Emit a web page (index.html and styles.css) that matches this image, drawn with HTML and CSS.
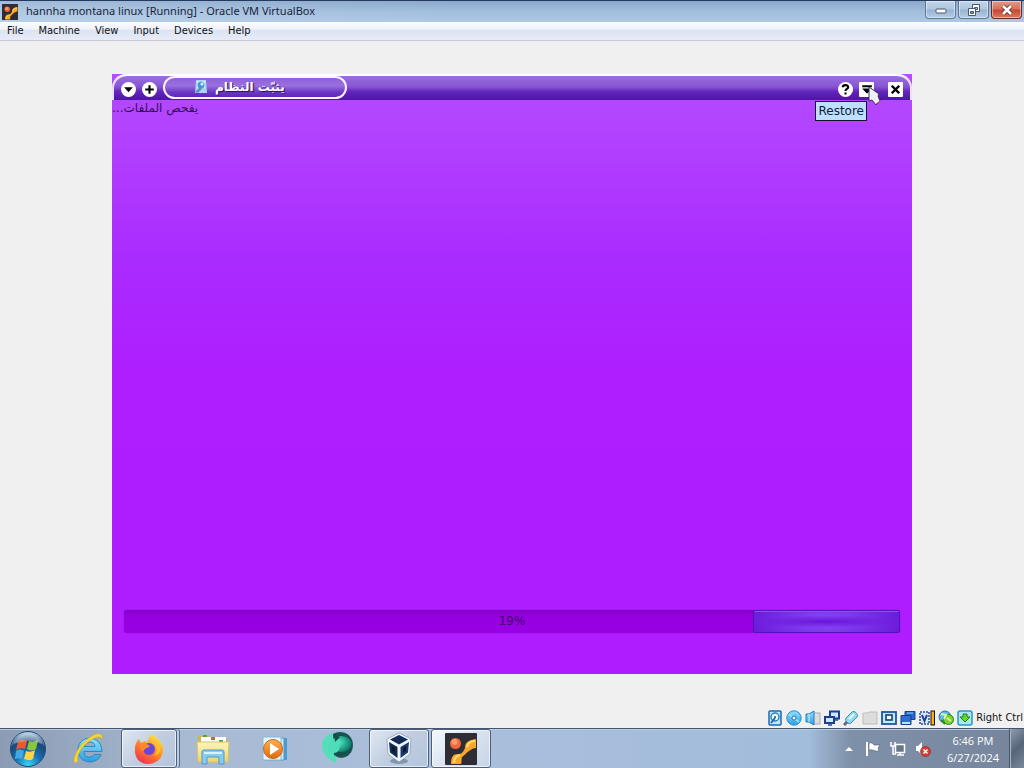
FILE: index.html
```html
<!DOCTYPE html>
<html lang="en">
<head>
<meta charset="utf-8">
<title>hannha montana linux [Running] - Oracle VM VirtualBox</title>
<link rel="stylesheet" href="styles.css">
</head>
<body>
<svg class="defs" aria-hidden="true">
  <defs>
    <linearGradient id="gBlue" x1="0" y1="0" x2="0" y2="1"><stop offset="0" stop-color="#8fe0fa"/><stop offset="1" stop-color="#2f9fe0"/></linearGradient>
    <radialGradient id="gOrb" cx=".5" cy=".95" r=".9"><stop offset="0" stop-color="#35d5f5"/><stop offset=".4" stop-color="#1872b4"/><stop offset=".75" stop-color="#1a4777"/><stop offset="1" stop-color="#a9c4dc"/></radialGradient>
    <linearGradient id="gFox" x1=".8" y1="0" x2=".2" y2="1"><stop offset="0" stop-color="#fff04a"/><stop offset=".45" stop-color="#ff9127"/><stop offset="1" stop-color="#f02c50"/></linearGradient>
    <linearGradient id="gFolder" x1="0" y1="0" x2="0" y2="1"><stop offset="0" stop-color="#fdf6b8"/><stop offset="1" stop-color="#eed36c"/></linearGradient>
    <linearGradient id="gIE" x1="0" y1="0" x2="0" y2="1"><stop offset="0" stop-color="#8fe4fb"/><stop offset="1" stop-color="#2c9bdc"/></linearGradient>
    <radialGradient id="gTeal" cx=".35" cy=".4" r=".7"><stop offset="0" stop-color="#5ff0cc"/><stop offset=".6" stop-color="#1fa78b"/><stop offset="1" stop-color="#146a62"/></radialGradient>
    <linearGradient id="gOr" x1="0" y1="0" x2="0" y2="1"><stop offset="0" stop-color="#ffb14a"/><stop offset="1" stop-color="#e06a10"/></linearGradient>
    <symbol id="vm" viewBox="0 0 32 32">
      <rect width="32" height="32" rx="1" fill="#2e2d33"/>
      <circle cx="10.500" cy="10.500" r="5.500" fill="#f4673a"/><circle cx="9.500" cy="9" r="3" fill="#ff9a6c"/>
      <path d="M6 31C6 24 8 21 13 21 17 21 18 19 20 15 20 9 24 7 31 6V15C28 15 27 16 24 18 21 20 20 22 17 24 16 27 17 29 16 31Z" fill="#f9a72b"/>
      <path d="M9 30C9 25 11 23 15 22M22 14C23 10 26 8 30 8" stroke="#ffdc73" stroke-width="2" fill="none"/>
    </symbol>
  </defs>
</svg>

<header class="titlebar">
  <svg class="titlebar-icon" viewBox="0 0 32 32"><use href="#vm"/></svg>
  <h1 class="titlebar-text">hannha montana linux [Running] - Oracle VM VirtualBox</h1>
  <div class="caption">
    <button class="caption-button" type="button" aria-label="Minimize"><svg width="14" height="12" viewBox="0 0 14 12"><rect x="2" y="5" width="10" height="4" rx="1" fill="#fff" stroke="#46586f"/></svg></button>
    <button class="caption-button" type="button" aria-label="Restore window"><svg width="14" height="14" viewBox="0 0 14 14" fill="#fff" stroke="#46586f"><path d="M5.500 1.500h7v7h-7z"/><path d="M7.500 4.500h3v2h-3z" fill="#a9c0dc"/><path d="M1.500 5.500h7v7h-7z"/><path d="M3.500 8.500h3v2h-3z" fill="#7c92b0"/></svg></button>
    <button class="caption-button caption-close" type="button" aria-label="Close window"><svg width="14" height="12" viewBox="0 0 14 12"><path d="M3 2l8 8M11 2l-8 8" stroke="#6d3030" stroke-width="4.500"/><path d="M3 2l8 8M11 2l-8 8" stroke="#fff" stroke-width="2.600"/></svg></button>
  </div>
</header>

<nav class="menubar">
  <button type="button">File</button><button type="button">Machine</button><button type="button">View</button><button type="button">Input</button><button type="button">Devices</button><button type="button">Help</button>
</nav>

<main class="workspace">
  <section class="guest">
    <div class="guest-bar">
      <div class="guest-tools">
        <button class="round" type="button" aria-label="Window menu"><svg viewBox="0 0 14 14"><path d="M3 5h8l-4 4.500z"/></svg></button>
        <button class="round" type="button" aria-label="On all desktops"><svg viewBox="0 0 14 14"><path d="M7 3v8M3 7h8" stroke="#000" stroke-width="2"/></svg></button>
      </div>
      <div class="guest-tab">
        <svg width="14" height="14" viewBox="0 0 14 14"><path d="M2 0h10l1 13H1z" fill="#a9d4f8"/><path d="M3 1h8v7H3z" fill="#d4efff"/><circle cx="7" cy="5" r="3.500" fill="#4797da"/><circle cx="8" cy="4" r="1.500" fill="#e8f8ff"/><path d="M1 12l5-5 2 2-4 4z" fill="#618ec5"/></svg>
        <h2 lang="ar" dir="rtl">يثبّت النظام</h2>
      </div>
      <div class="guest-controls">
        <button class="round" type="button" aria-label="Help"><svg viewBox="0 0 14 14"><path d="M4.500 5C4.500 2.300 9.800 2.300 9.500 5 9.300 6.500 7 6.600 7 8.400M7 9.700v2" stroke="#000" stroke-width="2" fill="none"/></svg></button>
        <button class="square" type="button" aria-describedby="tip" aria-label="Restore"><svg viewBox="0 0 14 14"><path d="M3 3h9v2H3zM3 6h9L8 10.500H7z"/></svg>
          <svg class="pointer" width="16" height="22" viewBox="0 0 16 22"><path d="M2 1L12 8 11 10 13 15 9 19 5 14 2 15Z" fill="#f1eff9" stroke="#37344d"/><path d="M9 18l4-3" stroke="#d55"/></svg>
        </button>
        <span class="tooltip" id="tip" role="tooltip">Restore</span>
        <button class="square square-close" type="button" aria-label="Close"><svg viewBox="0 0 14 14"><path d="M3.500 3.500l7 7M10.500 3.500l-7 7" stroke="#000" stroke-width="2.300"/></svg></button>
      </div>
    </div>
    <div class="guest-body">
      <p class="guest-message" lang="ar" dir="rtl"><label for="install">يفحص الملفات...</label></p>
      <div class="meter">
        <progress id="install" dir="rtl" max="100" value="19"></progress>
        <span class="meter-text">19%</span>
      </div>
    </div>
  </section>
</main>

<footer class="statusbar">
  <svg viewBox="0 0 16 16"><rect x="2" y="1" width="12" height="14" rx="1" fill="#bdeafb" stroke="#1d67b4" stroke-width="1.500"/><circle cx="8" cy="7" r="4" fill="#eafaff" stroke="#247fc8" stroke-width="1.400"/><circle cx="8" cy="7" r="1" fill="#165"/><path d="M4 13l4-5" stroke="#176bb4" stroke-width="2"/></svg>
  <svg viewBox="0 0 16 16"><circle cx="8" cy="8" r="7.200" fill="url(#gBlue)" stroke="#2c8bd0"/><path d="M8 8L3 4M8 8l5 4" stroke="#8fdcf8" stroke-width="2"/><circle cx="8" cy="8" r="2" fill="#fff" stroke="#1c6eb8"/></svg>
  <svg viewBox="0 0 16 16"><rect x="8" y="3" width="7" height="11" fill="#ddd" stroke="#aaa"/><path d="M1 4h3l5-3v14l-5-3H1z" fill="url(#gBlue)" stroke="#267ac0"/><path d="M4 4v8" stroke="#c8f3ff"/></svg>
  <svg viewBox="0 0 16 16"><path d="M6 1.500h9v7H6z" fill="#cbe8ff" stroke="#1d3f8e" stroke-width="2"/><path d="M1 7h9v6H1z" fill="#cbe8ff" stroke="#1d3f8e" stroke-width="2"/><path d="M4 15h4M11 10h3" stroke="#234a9b" stroke-width="1.500"/></svg>
  <svg viewBox="0 0 16 16"><path d="M3 8L9 2c2-2 7 2 5 5l-6 6c-2 2-7-2-5-5z" fill="#8fdcf0" stroke="#3b8fae"/><path d="M6 9l5-5" stroke="#e8fbff" stroke-width="2"/><path d="M4 12l-3 3" stroke="#667" stroke-width="3"/></svg>
  <svg viewBox="0 0 16 16"><path d="M1 3h5l1-1h8v12H1z" fill="#dcdcdc" stroke="#bdbdbd"/></svg>
  <svg viewBox="0 0 16 16"><rect x="1" y="2" width="14" height="12" fill="#bdeaff" stroke="#20559f" stroke-width="1.800"/><rect x="5" y="5" width="6" height="5" fill="#fff" stroke="#163b83" stroke-width="1.600"/></svg>
  <svg viewBox="0 0 16 16"><path d="M5 1.500h10v8H5z" fill="#2969c8" stroke="#193e98"/><path d="M1 5.500h10v9H1z" fill="#2d6fd0" stroke="#163c96"/><path d="M2 13h8" stroke="#b7e6ff" stroke-width="2"/><path d="M7 3h6" stroke="#8bc6ff"/></svg>
  <svg viewBox="0 0 16 16"><rect x="1" y="2" width="9" height="12" fill="#d8e8ff" stroke="#2d4aa5" stroke-width="1.500" stroke-dasharray="2 1"/><path d="M3 5l2.500 6L8 5" stroke="#243f9c" stroke-width="2" fill="none"/><rect x="12" y="1" width="3.500" height="14" fill="#f5b511" stroke="#161616"/></svg>
  <svg viewBox="0 0 16 16"><circle cx="7" cy="7" r="6" fill="#5eb9e8" stroke="#26779d"/><circle cx="10.500" cy="9.500" r="5" fill="#7bd32a" stroke="#27811c"/><path d="M3 4l5 1-2 4M9 8l4 3" stroke="#d7f9a2" stroke-width="2" fill="none"/><path d="M3 10l4 4" stroke="#2c8b32" stroke-width="2"/></svg>
  <svg viewBox="0 0 16 16"><rect x="1" y="1" width="14" height="14" rx="2" fill="#a7e6f2" stroke="#279abd" stroke-width="1.500"/><path d="M6 4h4v3h3l-5 5-5-5h3z" fill="#64d92c" stroke="#22821c"/></svg>
  <span>Right Ctrl</span>
</footer>

<div class="taskbar">
  <button class="start" type="button" aria-label="Start"><svg width="38" height="38" viewBox="0 0 38 38"><circle cx="19" cy="19" r="17.500" fill="url(#gOrb)" stroke="#234c72"/><path d="M9 12c3-3 6-2 9-1l-2 8c-3-1-6-1-9 1z" fill="#ee592c"/><path d="M20 11c3 1 6 1 9-1l-2 9c-3 2-6 2-9 0z" fill="#8cc63c"/><path d="M7 21c3-2 5-2 8 0l-2 8c-2-1-5-1-7 0z" fill="#41a8e8"/><path d="M17 21c3 1 6 1 9-1l-2 9c-3 2-6 1-9 0z" fill="#ffd343"/><path d="M4 14Q19-8 34 14 19 8 4 14" fill="#fff" opacity=".3"/></svg></button>
  <nav class="tasks">
    <button class="task" type="button" aria-label="Internet Explorer"><svg width="34" height="34" viewBox="0 0 34 34"><path d="M30 19.500H12c0 7 8 7 10 3h7C26 33 6 33 6 18 6 2 30 2 30 19.500M12 14.500h11c0-6-10-6-11 0" fill="url(#gIE)" fill-rule="evenodd" stroke="#238bc6"/><path d="M3 31C-1 27 8 10 20 4c6-4 12-3 10 4C30 4 25 4 19 8 9 14 4 25 6 29c-1 1-2 2-3 2z" fill="#f5d537" stroke="#cda91f" stroke-width=".5"/></svg></button>
    <button class="task task-open task-stack" type="button" aria-label="Firefox"><svg width="32" height="32" viewBox="0 0 32 32"><path d="M19 1c7 5 12 10 11 17-1 8-7 13-15 13C6 31 1 24 2 15c0-4 2-7 4-9l2 4 4-2 2 2c1-4 3-7 5-9z" fill="url(#gFox)"/><circle cx="16" cy="16" r="6" fill="#6846d8"/><path d="M8 11c4-2 6 0 9 2-3 3-6 2-6 5-3 0-5-3-3-7z" fill="#ff8a25"/><path d="M19 9c5 3 7 9 2 14 8-2 9-11-2-14z" fill="#ffc12e"/></svg></button>
    <button class="task" type="button" aria-label="Windows Explorer"><svg width="34" height="32" viewBox="0 0 34 32"><path d="M2 3h11l2 2h16v24H2z" fill="#d6b550"/><path d="M5 4h25v6H5z" fill="#fff"/><path d="M7 3h4M15 6h4M23 8h4" stroke-width="2" stroke="#57a03a"/><path d="M15 5h4" stroke="#db5b37" stroke-width="2"/><path d="M1 9h32l-1 20H2z" fill="url(#gFolder)" stroke="#dfbf63"/><path d="M6 31V19q0-2 2-2h18q2 0 2 2v12h-5v-7H11v7z" fill="#86cdf5" stroke="#5097cb"/><path d="M8 19h18v2H8z" fill="#d4f5ff"/></svg></button>
    <button class="task" type="button" aria-label="Media Player"><svg width="28" height="28" viewBox="0 0 28 28"><path d="M6 3h20v22H6z" fill="#4b9bd3"/><path d="M4 3h19v22H4z" fill="#cbeaf9" stroke="#5398c8"/><path d="M2 2h18v23H2z" fill="#e9f6fd" stroke="#85b9d7"/><circle cx="12" cy="14" r="9.500" fill="url(#gOr)" stroke="#c6671c"/><path d="M9 8l9 6-9 6z" fill="#fff"/></svg></button>
    <button class="task task-raised" type="button" aria-label="Wondershare"><svg width="34" height="34" viewBox="0 0 34 34"><path d="M2 13C4 7 9 3 14 3l-2 10 5 12-1 8C7 29 1 22 2 13z" fill="#54dfba"/><path d="M13 4C20-1 33 3 33 15c0 10-10 17-19 10z" fill="#17544f"/><ellipse cx="21" cy="14" rx="10.500" ry="8" fill="url(#gTeal)"/><ellipse cx="14" cy="16" rx="6" ry="7" fill="#4fdcb8"/><path d="M14 4l6 3-5 5z" fill="#164b48"/><path d="M16 25l5-3 2 5z" fill="#154f4c"/></svg></button>
    <button class="task task-open" type="button" aria-label="VirtualBox"><svg width="32" height="34" viewBox="0 0 32 34"><ellipse cx="16" cy="29" rx="9" ry="3" fill="#8297af"/><path d="M16 1l12 6-1 15-11 8-11-8L4 7z" fill="#eff6ff" stroke="#7189a5" stroke-width=".6"/><path d="M16 3l9 4.500-9 5-9-5z" fill="#102b55"/><path d="M6 10l8.500 5v11L7 20.500z" fill="#132a4c"/><path d="M26 10l-8.500 5v11l7.500-5.500z" fill="#1b3866"/><path d="M9 14l3 2v5l-3-2zM23 14l-3 2v5l3-2z" fill="#091a33"/></svg></button>
    <button class="task task-open task-active" type="button" aria-label="hannha montana linux"><svg width="32" height="32" viewBox="0 0 32 32"><use href="#vm"/></svg></button>
  </nav>
  <div class="tray">
    <button type="button" aria-label="Show hidden icons"><svg width="8" height="6" viewBox="0 0 8 6"><path d="M0 5l4-4 4 4z" fill="#fff"/></svg></button>
    <button type="button" aria-label="Action Center"><svg width="16" height="16" viewBox="0 0 16 16"><path d="M2 1v14" stroke="#fff" stroke-width="2"/><path d="M4 2c3-1 4 1 5 2l6 0-2 3 1 3c-4 1-5-2-10-1z" fill="#fff" stroke="#4e5d70" stroke-width=".6"/></svg></button>
    <button type="button" aria-label="Network"><svg width="16" height="16" viewBox="0 0 16 16"><path d="M5.500 3.500h9v8h-9z" fill="#66758a" stroke="#fff" stroke-width="1.500"/><path d="M7 14h7M10 12v2M1 1v4h4V1M3 5v8h3" stroke="#fff" stroke-width="1.500" fill="none"/></svg></button>
    <button type="button" aria-label="Volume muted"><svg width="16" height="16" viewBox="0 0 16 16"><path d="M1 5h2l4-4v13l-4-4H1z" fill="#fff"/><circle cx="10.500" cy="10.500" r="5" fill="#d93c32" stroke="#8e2520" stroke-width=".6"/><path d="M8.500 8.500l4 4M12.500 8.500l-4 4" stroke="#fff" stroke-width="1.500"/></svg></button>
    <div class="clock"><time>6:46 PM</time><time>6/27/2024</time></div>
  </div>
  <button class="show-desktop" type="button" aria-label="Show desktop"></button>
</div>
</body>
</html>
```

FILE: styles.css
```css
* { box-sizing: border-box; }
html, body { height: 100%; }
body {
  margin: 0;
  min-height: 100vh;
  display: flex;
  flex-direction: column;
  background: #f0f0f0;
  color: #111;
  font-family: "DejaVu Sans Condensed", "DejaVu Sans", sans-serif;
  font-size: 11px;
}
h1, h2, p { margin: 0; }
button { padding: 0; border: 0; background: none; color: inherit; font: inherit; }
svg { display: block; flex: none; }
.defs { position: absolute; width: 0; height: 0; }

/* Host window frame */
.titlebar {
  height: 22px;
  flex: none;
  display: flex;
  align-items: center;
  gap: 8px;
  padding-left: 2px;
  border-top: 1px solid #253a5e;
  background: linear-gradient(90deg, rgba(205, 221, 239, .35), rgba(205, 221, 239, 0) 45%), linear-gradient(#8aa8cc, #a2bedd 50%, #adc8e4);
}
.titlebar-icon { width: 16px; height: 16px; }
.titlebar-text {
  flex: 1;
  padding-bottom: 2px;
  color: #17253a;
  font: 400 11px/18px "Noto Sans", "Open Sans", sans-serif;
}
.caption { display: flex; gap: 2px; align-self: flex-start; padding-right: 2px; }
.caption-button {
  width: 31px;
  height: 18px;
  display: flex;
  align-items: center;
  justify-content: center;
  border: 1px solid #5f7896;
  border-top: 0;
  border-radius: 0 0 4px 4px;
  background: linear-gradient(#c1d4e9, #b0c7e0 48%, #98b3d1 52%, #b5cde6);
  box-shadow: inset 0 0 0 1px rgba(255, 255, 255, .45);
}
.caption-close {
  border-color: #642b2b;
  background: linear-gradient(#e29b8b, #d6705a 48%, #c54630 52%, #dc7a5c);
}
.menubar {
  height: 19px;
  flex: none;
  display: flex;
  align-items: center;
  gap: 15px;
  padding: 0 7px;
  border-bottom: 1px solid #c5cad6;
  background: linear-gradient(#fafcff, #eef2fa 40%, #dce3f2 45%, #e6ecf7);
}
.menubar button { padding-bottom: 1px; line-height: 17px; }

.workspace { flex: 1; display: flex; padding: 33px 112px 35px; }

/* Guest window */
.guest {
  flex: 1;
  display: flex;
  flex-direction: column;
  background: linear-gradient(#b54cff, #aa2aff 32%, #ae1eff 50%, #ae1cff);
}
.guest-bar {
  height: 26px;
  display: flex;
  align-items: center;
  justify-content: space-between;
  padding: 0 5px;
  border-top: 2px solid #fff;
  border-radius: 14px 14px 0 0;
  background: linear-gradient(#9a6fe0, #8555d2 45%, #6225bc 65%, #4d16a4);
  box-shadow: inset 2px 0 #eee0ff, inset -2px 0 #eee0ff;
}
.guest-tools, .guest-controls { position: relative; display: flex; align-items: center; gap: 6px; }
.guest-tools { padding: 2px 0 0 4px; }
.guest-controls { padding: 2px 4px 0 0; }
.round, .square {
  position: relative;
  width: 15px;
  height: 15px;
  border-radius: 50%;
  background: #fff;
}
.square { border-radius: 1px; }
.square-close { margin-left: 8px; }
.round > svg, .square > svg:first-child { width: 15px; height: 15px; }
.guest-tab {
  width: 184px;
  height: 23px;
  display: flex;
  align-items: center;
  gap: 7px;
  margin: 0 auto 0 6px;
  padding: 0 0 2px 29px;
  align-self: flex-start;
  border: 2px solid #fff2ff;
  border-radius: 12px;
  background: linear-gradient(#8d61da, #9a70df 40%, #6c37c5 75%, #5e26b8);
}
.guest-tab h2 {
  color: #fff;
  font: 700 12px/18px "DejaVu Sans", sans-serif;
  text-shadow: 1px 1px 1px #241048;
}
.pointer { position: absolute; z-index: 2; left: 8px; top: 4px; }
.tooltip {
  position: absolute;
  z-index: 1;
  right: 40px;
  top: 21px;
  padding: 0 2px;
  border: 1px solid #141035;
  background: #bfdfff;
  color: #101c35;
  font: 12px/18px "DejaVu Sans", sans-serif;
}
.guest-body { flex: 1; display: flex; flex-direction: column; justify-content: space-between; }
.guest-message {
  align-self: flex-start;
  color: #35104f;
  font: 12px/17px "DejaVu Sans", sans-serif;
}
.meter { position: relative; margin: 0 12px 41px; }
.meter progress {
  display: block;
  width: 100%;
  height: 23px;
  appearance: none;
  border: 0;
  border-radius: 3px;
  background: #9700e2;
  box-shadow: 0 0 0 1px #a51df0, 0 1px #c452ff;
}
.meter progress::-webkit-progress-bar {
  border-radius: 3px;
  background: linear-gradient(#8200c9, #9500df 25%, #9900e5);
}
.meter progress::-webkit-progress-value {
  border: 1px solid #5312bd;
  border-radius: 2px;
  background: radial-gradient(ellipse 50% 30% at 50% 50%, #6912d8, transparent), radial-gradient(ellipse 55% 130% at center, #8a4cfa, #6a18d8);
  box-shadow: inset 0 1px #8756ed;
}
.meter-text {
  position: absolute;
  inset: 0;
  color: #45006d;
  font: 12px/23px "DejaVu Sans", sans-serif;
  text-align: center;
}

.statusbar {
  height: 19px;
  flex: none;
  display: flex;
  align-items: center;
  justify-content: flex-end;
  gap: 3px;
  padding: 0 1px 1px 0;
}
.statusbar svg { width: 16px; height: 16px; }
.statusbar span { font: 11px/16px "DejaVu Sans Condensed", "DejaVu Sans", sans-serif; }

/* Host taskbar */
.taskbar {
  height: 40px;
  flex: none;
  display: flex;
  align-items: stretch;
  border-top: 1px solid #42566f;
  background: linear-gradient(90deg, #8a9bb3, #a8b9d2 18%, #aabfdc 40%, #a2bcdb 79%, #7f91a9 83%, #76859c 100%);
  box-shadow: inset 0 1px #bdcce0;
}
.start { width: 55px; display: flex; align-items: center; justify-content: center; margin-right: 4px; }
.tasks { display: flex; gap: 2px; }
.task {
  width: 60px;
  display: flex;
  align-items: center;
  justify-content: center;
  border: 1px solid transparent;
  border-radius: 3px;
}
.task-raised { padding-bottom: 4px; }
.task-open {
  border-color: #4d6078;
  background: linear-gradient(135deg, #dfe8f3, #c0cde0 50%, #b3c5dc);
  box-shadow: inset 0 0 0 1px rgba(255, 255, 255, .65);
}
.task-active { background: linear-gradient(135deg, #f4f8fc, #d9e3f0 50%, #c6d5e8); }
.task-stack {
  width: 56px;
  margin-right: 4px;
  box-shadow: inset 0 0 0 1px rgba(255, 255, 255, .65), 2px 0 #bccbe0, 3px 0 #566b86;
}
.tray { display: flex; align-items: center; gap: 9px; margin-left: auto; padding-right: 10px; color: #fff; }
.tray button:first-child { margin-right: 3px; }
.clock {
  display: flex;
  flex-direction: column;
  align-items: center;
  margin-left: 7px;
  font: 11px/17px "Open Sans", "Noto Sans", sans-serif;
}
.show-desktop {
  width: 15px;
  border: 1px solid #46556a;
  border-width: 0 0 0 1px;
  background: linear-gradient(135deg, #8f9db0, #566579 50%, #7a899e);
  box-shadow: inset 1px 0 #a8b5c5;
}
```
